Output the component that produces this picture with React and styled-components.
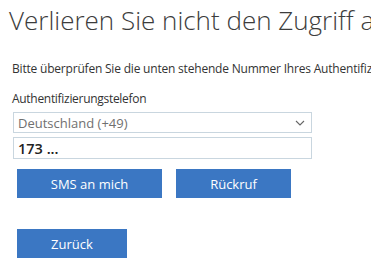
import React from "react";
import styled, { createGlobalStyle } from "styled-components";

const Global = createGlobalStyle`
  html, body { margin: 0; padding: 0; background: #fff; }
  body { font-family: "Open Sans", "Noto Sans", sans-serif; overflow: hidden; }
`;

const Page = styled.div`
  width: 371px;
  height: 261px;
  overflow: hidden;
  padding: 4px 0 0 9px;
  box-sizing: border-box;
`;

const Title = styled.h1`
  margin: 0;
  font-size: 26px;
  line-height: 32px;
  font-weight: 300;
  color: #3c3c3c;
  white-space: nowrap;
`;

const Form = styled.div`
  padding-left: 3px;
  display: flex;
  flex-direction: column;
`;

const Description = styled.p`
  margin: 24px 0 0;
  font-size: 12px;
  letter-spacing: -0.2px;
  line-height: 17px;
  color: #333;
  white-space: nowrap;
`;

const Label = styled.label`
  margin-top: 13px;
  font-size: 12px;
  letter-spacing: -0.3px;
  line-height: 17px;
  color: #333;
`;

const Field = styled.div`
  box-sizing: border-box;
  width: 299px;
  margin-left: 1px;
  height: ${(p) => p.$h}px;
  margin-top: ${(p) => p.$mt}px;
  border: 1px solid #c9d6df;
  display: flex;
  align-items: center;
  justify-content: space-between;
  padding: 0 6px 0 4px;
  font-size: ${(p) => (p.$strong ? 14.5 : 13)}px;
  font-weight: ${(p) => (p.$strong ? 600 : 400)};
  color: ${(p) => (p.$strong ? "#222" : "#707070")};
`;

const ButtonRow = styled.div`
  display: flex;
  gap: 14px;
  margin-top: ${(p) => p.$mt}px;
  padding-left: 5px;
`;

const Button = styled.button`
  box-sizing: border-box;
  width: ${(p) => p.$w}px;
  height: 29px;
  border: none;
  background: #3b77c3;
  color: #fff;
  font-family: "Open Sans", "Noto Sans", sans-serif;
  font-size: 13px;
  padding: 0;
  cursor: pointer;
`;

const Chevron = () => (
  <svg width="10" height="6" viewBox="0 0 10 6">
    <path d="M1 1 L5 5 L9 1" fill="none" stroke="#666" strokeWidth="1.1" />
  </svg>
);

export default function App() {
  return (
    <>
      <Global />
      <Page>
        <Title>Verlieren Sie nicht den Zugriff auf Ihr Konto!</Title>
        <Form>
          <Description>
            Bitte überprüfen Sie die unten stehende Nummer Ihres Authentifizierungstelefons.
          </Description>
          <Label>Authentifizierungstelefon</Label>
          <Field $h={21} $mt={5}>
            <span>Deutschland (+49)</span>
            <Chevron />
          </Field>
          <Field $h={22} $mt={4} $strong>
            <span>173 ...</span>
          </Field>
          <ButtonRow $mt={10}>
            <Button $w={145}>SMS an mich</Button>
            <Button $w={115}>Rückruf</Button>
          </ButtonRow>
          <ButtonRow $mt={31}>
            <Button $w={110}>Zurück</Button>
          </ButtonRow>
        </Form>
      </Page>
    </>
  );
}
